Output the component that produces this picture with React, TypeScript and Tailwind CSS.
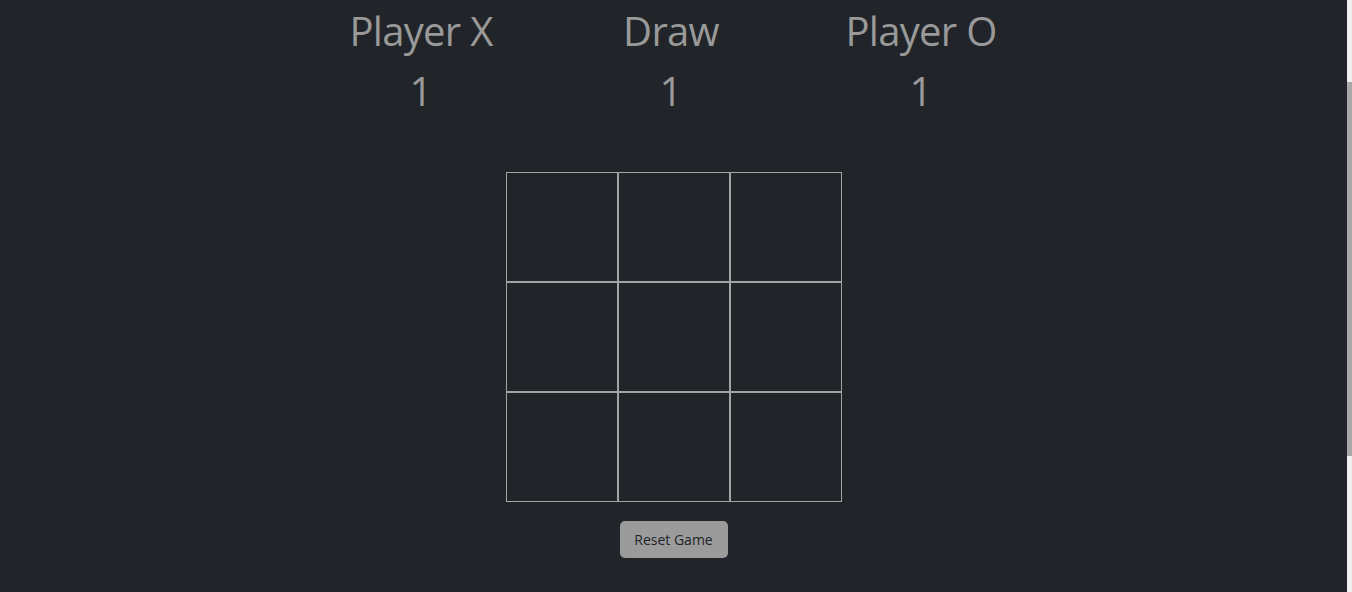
import React, { useState } from "react";

type Cell = "X" | "O" | null;

const scores = [
  { label: "Player X", value: 1 },
  { label: "Draw", value: 1 },
  { label: "Player O", value: 1 },
];

export default function App() {
  const [board, setBoard] = useState<Cell[]>(Array(9).fill(null));

  const resetGame = () => setBoard(Array(9).fill(null));

  return (
    <div className="flex h-[592px] w-full overflow-hidden bg-[#212529] font-['Open_Sans',sans-serif]">
      <main className="flex flex-1 flex-col items-center pt-[7px]">
        {/* Score */}
        <div className="mr-[5px] flex text-[#999999]">
          {scores.map((s) => (
            <div key={s.label} className="flex w-[250px] flex-col items-center">
              <h1 className="mb-3 text-[40px] leading-[48px] tracking-[-0.7px]">{s.label}</h1>
              <h1 className="text-[40px] leading-[48px]">{s.value}</h1>
            </div>
          ))}
        </div>

        {/* Board */}
        <div className="mt-[57px] grid grid-cols-[repeat(3,112px)] grid-rows-[repeat(3,110px)]">
          {board.map((cell, i) => (
            <button
              key={i}
              className="border border-[#a3a3a3] text-[56px] text-[#999999]"
              onClick={() => {
                if (cell) return;
                const next = [...board];
                next[i] = "X";
                setBoard(next);
              }}
            >
              {cell}
            </button>
          ))}
        </div>

        <button
          onClick={resetGame}
          className="mt-[19px] h-[37px] w-[108px] rounded-[5px] bg-[#9b9b9b] text-[14px] text-[#212529]"
        >
          Reset Game
        </button>
      </main>

      {/* scrollbar */}
      <div className="flex w-[5px] flex-col bg-[#f0f0f0]">
        <div className="h-[82px]" />
        <div className="h-[374px] bg-[#a8a8a8]" />
      </div>
    </div>
  );
}
